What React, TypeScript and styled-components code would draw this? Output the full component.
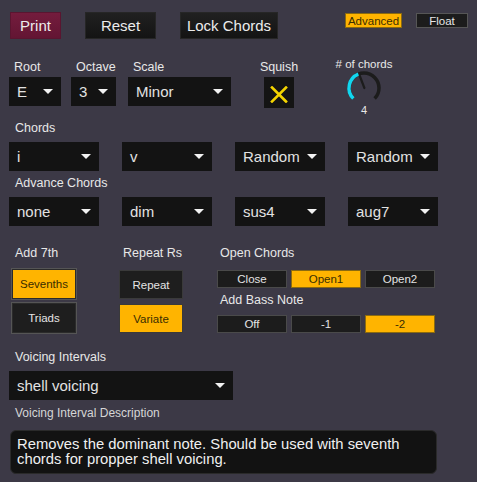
import React from 'react';
import styled, { createGlobalStyle } from 'styled-components';

const Global = createGlobalStyle`
  html, body { margin: 0; padding: 0; background: #3c3946; }
  body { font-family: "Liberation Sans", Arial, Helvetica, sans-serif; }
`;

const Device = styled.div`
  width: 477px;
  height: 482px;
  background: #3c3946;
  box-sizing: border-box;
  overflow: hidden;
  display: flex;
  flex-direction: column;
  color: #e8e8e8;
`;

const TopBar = styled.div`
  display: flex;
  align-items: flex-start;
  justify-content: space-between;
  margin-top: 12px;
  padding: 0 9px 0 10px;
`;

const ActionGroup = styled.div`
  display: flex;
  gap: 24px;
`;

const ActionButton = styled.div<{ $w: number; $primary?: boolean }>`
  width: ${p => p.$w}px;
  height: 27px;
  box-sizing: border-box;
  display: flex;
  align-items: center;
  justify-content: center;
  font-size: 15px;
  color: #ececec;
  background: ${p =>
    p.$primary
      ? 'linear-gradient(#741c3d, #631533)'
      : 'linear-gradient(#202020, #141414)'};
  border: 1px solid ${p => (p.$primary ? '#5a1530' : '#262626')};
`;

const ModeGroup = styled.div`
  display: flex;
  gap: 14px;
  margin-top: 1px;
`;

const ModeButton = styled.div<{ $w: number; $on?: boolean }>`
  width: ${p => p.$w}px;
  height: 15px;
  box-sizing: border-box;
  display: flex;
  align-items: center;
  justify-content: center;
  font-size: 11.5px;
  color: ${p => (p.$on ? '#3b2e00' : '#e6e6e6')};
  background: ${p => (p.$on ? '#ffb400' : '#1c1c1c')};
  border: 1px solid ${p => (p.$on ? '#8a6a10' : '#565656')};
`;

const ParamsRow = styled.div`
  display: flex;
  align-items: flex-start;
  height: 47px;
  margin-top: 21px;
  padding-left: 9px;
`;

const Field = styled.div<{ $ml?: number }>`
  display: flex;
  flex-direction: column;
  gap: 2px;
  margin-left: ${p => p.$ml ?? 0}px;
`;

const Label = styled.div<{ $pl?: number }>`
  font-size: 12.5px;
  line-height: 15px;
  height: 15px;
  color: #e8e8e8;
  padding-left: ${p => p.$pl ?? 5}px;
  white-space: nowrap;
`;

const Dropdown = styled.div<{ $w: number }>`
  width: ${p => p.$w}px;
  height: 29px;
  box-sizing: border-box;
  background: #131313;
  display: flex;
  align-items: center;
  justify-content: space-between;
  padding: 0 8px 0 8px;
  font-size: 15px;
  color: #e2e2e2;
  white-space: nowrap;
`;

const Caret = styled.span`
  width: 0;
  height: 0;
  border-left: 5px solid transparent;
  border-right: 5px solid transparent;
  border-top: 5px solid #f2f2f2;
  flex: none;
`;

const SquishField = styled.div`
  display: flex;
  flex-direction: column;
  align-items: center;
  gap: 2px;
  width: 40px;
  margin-left: 28px;
`;

const SquishBox = styled.div`
  width: 30px;
  height: 31px;
  background: #141414;
  display: flex;
  align-items: center;
  justify-content: center;
`;

const KnobField = styled.div`
  display: flex;
  flex-direction: column;
  align-items: center;
  width: 70px;
  margin-left: 30px;
  margin-top: -2px;
`;

const KnobLabel = styled.div`
  font-size: 11.5px;
  line-height: 13px;
  color: #e8e8e8;
  white-space: nowrap;
`;

const KnobValue = styled.div`
  font-size: 11px;
  line-height: 12px;
  margin-top: -1px;
  color: #e8e8e8;
`;

const SectionLabel = styled.div<{ $mt: number; $size?: number }>`
  margin-top: ${p => p.$mt}px;
  font-size: ${p => p.$size ?? 12.5}px;
  line-height: 15px;
  color: ${p => (p.$size ? '#d6d6d6' : '#e8e8e8')};
  padding-left: 15px;
  white-space: nowrap;
`;

const DropRow = styled.div`
  display: flex;
  gap: 23px;
  margin-top: 6px;
  padding-left: 9px;
`;

const OptionsRow = styled.div`
  display: flex;
  align-items: flex-start;
  margin-top: 20px;
  padding-left: 11px;
`;

const Column = styled.div<{ $w: number; $ml?: number }>`
  width: ${p => p.$w}px;
  margin-left: ${p => p.$ml ?? 0}px;
  display: flex;
  flex-direction: column;
`;

const ColLabel = styled.div<{ $mt?: number; $pl?: number }>`
  font-size: 12.5px;
  line-height: 15px;
  color: #e8e8e8;
  margin-top: ${p => p.$mt ?? 0}px;
  padding-left: ${p => p.$pl ?? 4}px;
  white-space: nowrap;
`;

const ToggleStack = styled.div<{ $mt: number; $gap: number }>`
  display: flex;
  flex-direction: column;
  gap: ${p => p.$gap}px;
  margin-top: ${p => p.$mt}px;
`;

const Toggle = styled.div<{ $on?: boolean; $h: number; $frame?: boolean }>`
  height: ${p => p.$h}px;
  box-sizing: border-box;
  display: flex;
  align-items: center;
  justify-content: center;
  font-size: 11.5px;
  color: ${p => (p.$on ? '#3a2d00' : '#e4e4e4')};
  background: ${p => (p.$on ? '#ffb400' : '#1e1e1e')};
  border: 1px solid ${p => (p.$frame ? '#555' : '#3a3a3a')};
  box-shadow: ${p => (p.$frame ? 'inset 0 0 0 1px #2b2b2b' : 'none')};
`;

const Segments = styled.div<{ $mt: number }>`
  display: grid;
  grid-template-columns: repeat(3, 70px);
  gap: 4px;
  margin-top: ${p => p.$mt}px;
`;

const Segment = styled.div<{ $on?: boolean }>`
  height: 18px;
  box-sizing: border-box;
  display: flex;
  align-items: center;
  justify-content: center;
  font-size: 11.5px;
  color: ${p => (p.$on ? '#3a2d00' : '#e4e4e4')};
  background: ${p => (p.$on ? '#ffb400' : '#1c1c1c')};
  border: 1px solid ${p => (p.$on ? '#8a6a10' : '#4a4a4a')};
`;

const WideDrop = styled.div`
  margin-top: 6px;
  padding-left: 9px;
`;

const Description = styled.div`
  margin: 9px 0 0 10px;
  width: 427px;
  height: 44px;
  box-sizing: border-box;
  background: #121212;
  border: 1px solid #2a2a2a;
  border-radius: 6px;
  padding: 6px 6px 0 6px;
  font-size: 14.8px;
  line-height: 15px;
  color: #f0f0f0;
`;

const Knob: React.FC = () => (
  <svg width="40" height="34" viewBox="0 0 40 34">
    <path d="M 9.39 27.61 A 15 15 0 1 1 30.61 27.61" fill="none" stroke="#1c1c1c" strokeWidth="3.5" />
    <path d="M 9.39 27.61 A 15 15 0 0 1 14.38 3.09" fill="none" stroke="#12d6ef" strokeWidth="3.5" />
    <line x1="15.8" y1="5" x2="20.4" y2="17" stroke="#1c1c1c" strokeWidth="2.2" strokeLinecap="round" />
  </svg>
);

const Cross: React.FC = () => (
  <svg width="18" height="17" viewBox="0 0 18 17" style={{ marginTop: 4 }}>
    <path d="M2 1.5 L16 15.5 M16 1.5 L2 15.5" stroke="#f4d400" strokeWidth="2.6" strokeLinecap="square" />
  </svg>
);

const Drop: React.FC<{ w: number; value: string }> = ({ w, value }) => (
  <Dropdown $w={w}>
    <span>{value}</span>
    <Caret />
  </Dropdown>
);

export default function App() {
  return (
    <Device>
      <Global />
      <TopBar>
        <ActionGroup>
          <ActionButton $w={51} $primary>Print</ActionButton>
          <ActionButton $w={71}>Reset</ActionButton>
          <ActionButton $w={98}>Lock Chords</ActionButton>
        </ActionGroup>
        <ModeGroup>
          <ModeButton $w={57} $on>Advanced</ModeButton>
          <ModeButton $w={52}>Float</ModeButton>
        </ModeGroup>
      </TopBar>

      <ParamsRow>
        <Field>
          <Label>Root</Label>
          <Drop w={52} value="E" />
        </Field>
        <Field $ml={10}>
          <Label>Octave</Label>
          <Drop w={45} value="3" />
        </Field>
        <Field $ml={12}>
          <Label>Scale</Label>
          <Drop w={103} value="Minor" />
        </Field>
        <SquishField>
          <Label $pl={0}>Squish</Label>
          <SquishBox>
            <Cross />
          </SquishBox>
        </SquishField>
        <KnobField>
          <KnobLabel># of chords</KnobLabel>
          <Knob />
          <KnobValue>4</KnobValue>
        </KnobField>
      </ParamsRow>

      <SectionLabel $mt={14}>Chords</SectionLabel>
      <DropRow>
        <Drop w={90} value="i" />
        <Drop w={90} value="v" />
        <Drop w={90} value="Random" />
        <Drop w={90} value="Random" />
      </DropRow>

      <SectionLabel $mt={5}>Advance Chords</SectionLabel>
      <DropRow>
        <Drop w={90} value="none" />
        <Drop w={90} value="dim" />
        <Drop w={90} value="sus4" />
        <Drop w={90} value="aug7" />
      </DropRow>

      <OptionsRow>
        <Column $w={66}>
          <ColLabel>Add 7th</ColLabel>
          <ToggleStack $mt={7} $gap={2}>
            <Toggle $h={32} $frame $on>Sevenths</Toggle>
            <Toggle $h={32} $frame>Triads</Toggle>
          </ToggleStack>
        </Column>
        <Column $w={64} $ml={42}>
          <ColLabel>Repeat Rs</ColLabel>
          <ToggleStack $mt={9} $gap={5}>
            <Toggle $h={29}>Repeat</Toggle>
            <Toggle $h={29} $on>Variate</Toggle>
          </ToggleStack>
        </Column>
        <Column $w={218} $ml={34}>
          <ColLabel $pl={3}>Open Chords</ColLabel>
          <Segments $mt={9}>
            <Segment>Close</Segment>
            <Segment $on>Open1</Segment>
            <Segment>Open2</Segment>
          </Segments>
          <ColLabel $pl={3} $mt={5}>Add Bass Note</ColLabel>
          <Segments $mt={7}>
            <Segment>Off</Segment>
            <Segment>-1</Segment>
            <Segment $on>-2</Segment>
          </Segments>
        </Column>
      </OptionsRow>

      <SectionLabel $mt={16}>Voicing Intervals</SectionLabel>
      <WideDrop>
        <Drop w={224} value="shell voicing" />
      </WideDrop>

      <SectionLabel $mt={6} $size={12}>Voicing Interval Description</SectionLabel>
      <Description>
        Removes the dominant note. Should be used with seventh chords for propper shell voicing.
      </Description>
    </Device>
  );
}
